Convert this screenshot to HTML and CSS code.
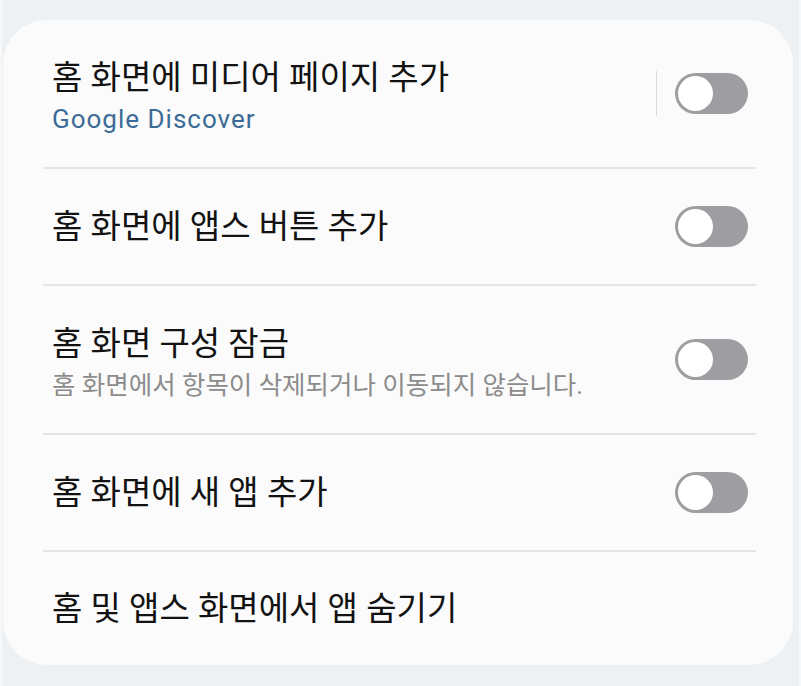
FILE: index.html
```html
<!DOCTYPE html>
<html lang="ko">
<head>
    <meta charset="UTF-8">
    <meta name="viewport" content="width=device-width, initial-scale=1.0">
    <title>홈 화면 설정</title>
    <link rel="stylesheet" href="styles.css">
</head>
<body>
    <div class="page">
        <div class="card">
            <ul class="list">
                <li class="row two-line">
                    <div class="text">
                        <div class="title">홈 화면에 미디어 페이지 추가</div>
                        <div class="sub link">Google Discover</div>
                    </div>
                    <span class="sep"></span>
                    <span class="toggle"><span class="knob"></span></span>
                </li>
                <li class="row">
                    <div class="text">
                        <div class="title">홈 화면에 앱스 버튼 추가</div>
                    </div>
                    <span class="toggle"><span class="knob"></span></span>
                </li>
                <li class="row two-line">
                    <div class="text">
                        <div class="title">홈 화면 구성 잠금</div>
                        <div class="sub">홈 화면에서 항목이 삭제되거나 이동되지 않습니다.</div>
                    </div>
                    <span class="toggle"><span class="knob"></span></span>
                </li>
                <li class="row">
                    <div class="text">
                        <div class="title">홈 화면에 새 앱 추가</div>
                    </div>
                    <span class="toggle"><span class="knob"></span></span>
                </li>
                <li class="row last">
                    <div class="text">
                        <div class="title">홈 및 앱스 화면에서 앱 숨기기</div>
                    </div>
                </li>
            </ul>
        </div>
    </div>
</body>
</html>
```

FILE: styles.css
```css
* {
    margin: 0;
    padding: 0;
    box-sizing: border-box;
}

body {
    background-color: #eef1f4;
    font-family: Roboto, 'Noto Sans CJK KR', sans-serif;
    color: #111;
}

.page {
    height: 686px;
    padding: 20px 6px 0 1px;
    border-left: 2px solid #f7f8f9;
    border-right: 2px solid #f7f8f9;
}

.card {
    height: 645px;
    background-color: #fbfbfb;
    border-radius: 44px;
}

.list {
    list-style: none;
    padding: 0 37px 0 40px;
}

.row {
    display: flex;
    align-items: center;
    padding: 37px 8px 37px 9px;
    border-bottom: 2px solid #e4e4e5;
}

.row.two-line {
    padding-top: 27px;
    padding-bottom: 27px;
}

.row.two-line .text {
    padding-top: 11px;
}

.row.last {
    border-bottom: none;
}

.text {
    flex: 1;
}

.title {
    font-size: 33px;
    line-height: 40px;
    color: #121212;
}

.sub {
    font-size: 25.5px;
    line-height: 42px;
    color: #8c8c8c;
}

.sub.link {
    font-size: 26px;
    letter-spacing: 1px;
    color: #3b6b97;
}

.sep {
    width: 1px;
    height: 45px;
    background-color: #d9d9d9;
    margin-right: 18px;
}

.toggle {
    width: 73px;
    height: 41px;
    border-radius: 21px;
    background-color: #9d9da2;
    padding: 3px;
    display: flex;
    align-items: center;
}

.knob {
    width: 35px;
    height: 35px;
    border-radius: 50%;
    background-color: #fff;
}
```
